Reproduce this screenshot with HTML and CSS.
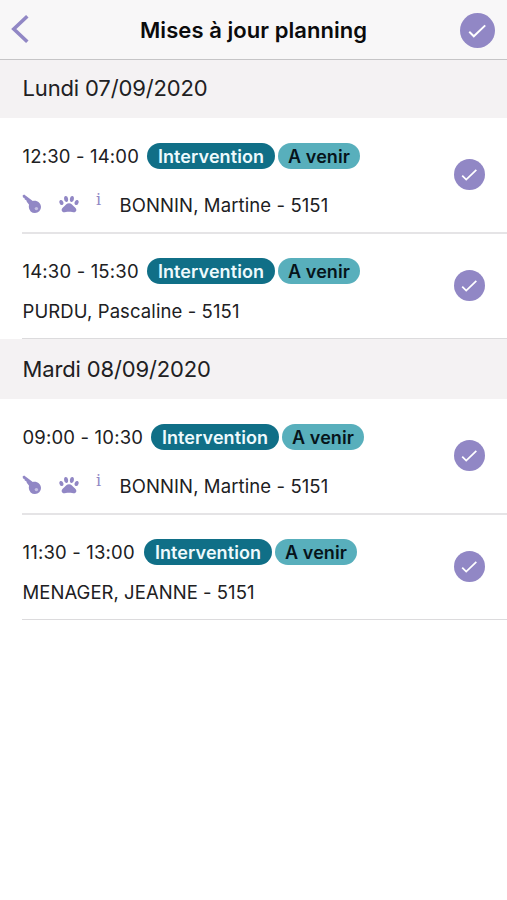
FILE: index.html
```html
<!DOCTYPE html>
<html lang="fr">
<head>
<meta charset="utf-8">
<title>Mises à jour planning</title>
<link rel="stylesheet" href="styles.css">
</head>
<body>
<svg class="defs" aria-hidden="true">
  <symbol id="check" viewBox="0 0 34 34"><circle cx="17" cy="17" r="17" fill="#9187c5"/><path d="M9 18.200l4.400 4.400L24.500 12" fill="none" stroke="#fff" stroke-width="1.900"/></symbol>
  <symbol id="key" viewBox="0 0 20 20"><path d="M.6 1.600l1.500-1.200 8.700 6.500c4-1 8.200 1.800 8.200 6a6.100 6.100 0 0 1-12.200.2c0-1 .1-1.700.3-2.400L4.800 7.700 4.300 6.200 2.800 5.600 2.400 4 1 3.500z" fill="#9187c5"/><circle cx="14.400" cy="14.600" r="1.700" fill="#c6c0e3"/></symbol>
  <symbol id="paw" viewBox="0 0 20 18"><g fill="#9187c5"><ellipse cx="2.400" cy="7.500" rx="1.900" ry="2.600" transform="rotate(-22 2.400 7.500)"/><ellipse cx="7.100" cy="4" rx="2" ry="3" transform="rotate(-8 7.100 4)"/><ellipse cx="12.900" cy="4" rx="2" ry="3" transform="rotate(8 12.900 4)"/><ellipse cx="17.600" cy="7.500" rx="1.900" ry="2.600" transform="rotate(22 17.600 7.500)"/><path d="M10 8.200c2.200 0 3.400 1.500 4.700 3 1.500 1.600 3 2.400 2.600 4.400-.4 2-2.500 1.900-4.100 1.500-2.100-.6-4.300-.6-6.400 0-1.600.4-3.700.5-4.100-1.500-.4-2 1.100-2.800 2.600-4.400 1.300-1.500 2.500-3 4.700-3z"/></g></symbol>
  <symbol id="back" viewBox="0 0 18 30"><path d="M16.300 1.300L2.800 14l13.500 12.700" fill="none" stroke="#9187c5" stroke-width="3.600"/></symbol>
</svg>
<header class="bar">
  <svg class="back"><use href="#back"/></svg>
  <h1 class="title">Mises à jour planning</h1>
  <svg class="check-all"><use href="#check"/></svg>
</header>
<main>
  <h2 class="day first">Lundi 07/09/2020</h2>
  <section class="row tall">
    <div class="info">
      <div class="slot"><span class="time">12:30 - 14:00</span><span class="badge kind">Intervention</span><span class="badge state">A venir</span></div>
      <div class="person"><svg class="key"><use href="#key"/></svg><svg class="paw"><use href="#paw"/></svg><span class="note">i</span><span class="name">BONNIN, Martine - 5151</span></div>
    </div>
    <svg class="check"><use href="#check"/></svg>
  </section>
  <section class="row">
    <div class="info">
      <div class="slot"><span class="time">14:30 - 15:30</span><span class="badge kind">Intervention</span><span class="badge state">A venir</span></div>
      <div class="person"><span class="name">PURDU, Pascaline - 5151</span></div>
    </div>
    <svg class="check"><use href="#check"/></svg>
  </section>
  <h2 class="day">Mardi 08/09/2020</h2>
  <section class="row tall">
    <div class="info">
      <div class="slot"><span class="time wide">09:00 - 10:30</span><span class="badge kind">Intervention</span><span class="badge state">A venir</span></div>
      <div class="person"><svg class="key"><use href="#key"/></svg><svg class="paw"><use href="#paw"/></svg><span class="note">i</span><span class="name">BONNIN, Martine - 5151</span></div>
    </div>
    <svg class="check"><use href="#check"/></svg>
  </section>
  <section class="row">
    <div class="info">
      <div class="slot"><span class="time narrow">11:30 - 13:00</span><span class="badge kind">Intervention</span><span class="badge state">A venir</span></div>
      <div class="person"><span class="name caps">MENAGER, JEANNE - 5151</span></div>
    </div>
    <svg class="check"><use href="#check"/></svg>
  </section>
</main>
</body>
</html>
```
FILE: styles.css
```css
* { box-sizing: border-box; }
body { margin: 0; background: #fff; color: #202022; font-family: Inter, "Liberation Sans", sans-serif; }
svg { display: block; flex: none; }
.defs { display: none; }
.bar { height: 60px; display: flex; align-items: center; justify-content: space-between; padding: 0 12px 0 11px; background: #f8f7f8; border-bottom: 1px solid #c6c5c7; }
.back { width: 18px; height: 30px; }
.title { margin: 0 0 0 19px; width: 228px; font-size: 22px; line-height: 30px; font-weight: 600; letter-spacing: .06px; white-space: nowrap; color: #0b0b0c; }
.check-all { width: 35px; height: 35px; margin-top: 2px; }
.day { margin: 0; height: 60px; padding-left: 22.5px; background: #f4f2f3; font-size: 22px; font-weight: 400; line-height: 60px; letter-spacing: -.15px; white-space: nowrap; }
.day.first { height: 58px; line-height: 57px; }
.row { height: 105px; margin-left: 22px; padding-right: 22px; display: flex; align-items: center; border-bottom: 1px solid #dcdbdd; }
.row.tall { height: 116px; border-bottom-width: 2px; border-color: #e5e4e6; }
.info { flex: 1; height: 100%; padding-top: 24px; }
.tall .info { padding-top: 25px; }
.slot { display: flex; align-items: center; height: 26px; }
.time { font-size: 18.5px; letter-spacing: .17px; padding-left: .5px; width: 125px; white-space: nowrap; flex: none; }
.wide { width: 129px; }
.narrow { width: 122px; }
.badge { height: 26px; border-radius: 13px; line-height: 27px; font-size: 18px; font-weight: 600; letter-spacing: .08px; text-align: center; white-space: nowrap; flex: none; }
.kind { width: 128px; background: #106f87; color: #eefafd; }
.state { width: 82px; margin-left: 3px; background: #58afbc; color: #06141a; }
.person { display: flex; align-items: center; height: 26px; margin-top: 14px; font-size: 18.5px; white-space: nowrap; }
.tall .person { margin-top: 23px; }
.name { letter-spacing: .1px; padding-left: .5px; }
.caps { letter-spacing: .04px; }
.key { width: 20px; height: 20px; margin-top: -2px; }
.paw { width: 20px; height: 18px; margin: -3px 0 0 17px; }
.note { width: 5px; margin: -10px 18px 0 17px; color: #9187c5; font-family: "DejaVu Serif", serif; font-size: 16px; line-height: 26px; }
.check { width: 31px; height: 31px; margin-top: -1px; }
```
